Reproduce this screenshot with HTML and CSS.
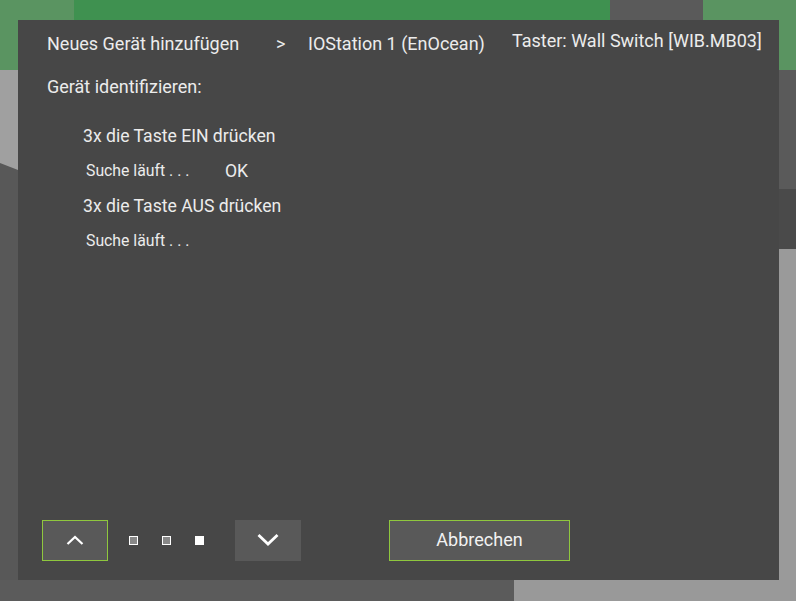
FILE: index.html
```html
<!DOCTYPE html>
<html lang="de">
<head>
<meta charset="utf-8">
<link rel="stylesheet" href="styles.css">
</head>
<body>
<div class="backdrop">
  <div class="bg bg-top-left"></div>
  <div class="bg bg-top-green"></div>
  <div class="bg bg-top-grey"></div>
  <div class="bg bg-top-right"></div>
  <div class="bg bg-left-light"></div>
  <div class="bg bg-left-dark"></div>
  <div class="bg bg-right-grey"></div>
  <div class="bg bg-right-dark"></div>
  <div class="bg bg-right-light"></div>
  <div class="bg bg-bottom-dark"></div>
  <div class="bg bg-bottom-light"></div>
</div>

<div class="dialog">
  <div class="header">
    <span class="crumb crumb-first">Neues Gerät hinzufügen</span>
    <span class="crumb-sep">&gt;</span>
    <span class="crumb crumb-second">IOStation 1 (EnOcean)</span>
    <span class="crumb crumb-device">Taster: Wall Switch [WIB.MB03]</span>
  </div>

  <div class="title">Gerät identifizieren:</div>

  <div class="steps">
    <div class="step">3x die Taste EIN drücken</div>
    <div class="status"><span class="status-label">Suche läuft . . .</span><span class="status-ok">OK</span></div>
    <div class="step">3x die Taste AUS drücken</div>
    <div class="status"><span class="status-label">Suche läuft . . .</span></div>
  </div>

  <div class="footer">
    <button class="btn btn-nav btn-focus" aria-label="hoch">
      <svg width="18" height="10" viewBox="0 0 18 10"><path d="M1.5 9 L9 2 L16.5 9" fill="none" stroke="#fff" stroke-width="2.2"/></svg>
    </button>
    <div class="pager">
      <span class="dot"></span>
      <span class="dot"></span>
      <span class="dot dot-active"></span>
    </div>
    <button class="btn btn-nav" aria-label="runter">
      <svg width="22" height="13" viewBox="0 0 22 13"><path d="M1.5 2 L11 11 L20.5 2" fill="none" stroke="#fff" stroke-width="2.8"/></svg>
    </button>
    <button class="btn btn-cancel btn-focus">Abbrechen</button>
  </div>
</div>
</body>
</html>
```

FILE: styles.css
```css
html, body {
  margin: 0;
  padding: 0;
  width: 796px;
  height: 601px;
  overflow: hidden;
  background: #5a5a5a;
  font-family: Roboto, "Liberation Sans", sans-serif;
}

.backdrop {
  position: absolute;
  inset: 0;
}

.bg { position: absolute; }
.bg-top-left { left: 0; top: 0; width: 74px; height: 70px; background: #5a9461; }
.bg-top-green { left: 74px; top: 0; width: 536px; height: 20px; background: #3f9150; }
.bg-top-grey { left: 610px; top: 0; width: 93px; height: 20px; background: #5a5a5a; }
.bg-top-right { left: 703px; top: 0; width: 93px; height: 70px; background: #5a9461; }
.bg-left-light { left: 0; top: 70px; width: 18px; height: 100px; background: #a0a0a0; }
.bg-left-dark {
  left: 0; top: 160px; width: 18px; height: 441px; background: #585858;
  clip-path: polygon(0 3px, 100% 10px, 100% 100%, 0 100%);
}
.bg-right-grey { left: 779px; top: 70px; width: 17px; height: 119px; background: #5a5a5a; }
.bg-right-dark { left: 779px; top: 189px; width: 17px; height: 60px; background: #4a4a4a; }
.bg-right-light { left: 779px; top: 249px; width: 17px; height: 352px; background: #9a9a9a; }
.bg-bottom-dark { left: 0; top: 580px; width: 514px; height: 21px; background: #5b5b5b; }
.bg-bottom-light { left: 514px; top: 580px; width: 282px; height: 21px; background: #999999; }

.dialog {
  position: absolute;
  left: 18px;
  top: 20px;
  width: 761px;
  height: 560px;
  background: #474747;
  color: #ececec;
  box-sizing: border-box;
  display: flex;
  flex-direction: column;
}

.header {
  display: flex;
  align-items: flex-start;
  padding: 12px 0 0 29px;
  height: 36px;
  box-sizing: border-box;
  font-size: 18px;
  line-height: 24px;
}

.crumb-first { width: 229px; }
.crumb-sep { width: 32px; }
.crumb-second { width: 204px; }
.crumb-device { margin-top: -3px; }

.title {
  padding: 19px 0 0 29px;
  font-size: 18px;
  line-height: 24px;
}

.steps {
  padding: 25px 0 0 65px;
  display: flex;
  flex-direction: column;
}

.step {
  font-size: 17.6px;
  line-height: 24px;
  height: 35px;
}

.status {
  font-size: 15.8px;
  line-height: 24px;
  height: 35px;
  padding-left: 3px;
  display: flex;
}

.status-label { width: 139px; }
.status-ok { font-size: 17.6px; }

.footer {
  margin-top: auto;
  padding: 0 0 19px 24px;
  display: flex;
  align-items: center;
}

.btn {
  height: 41px;
  box-sizing: border-box;
  background: #595959;
  border: 1px solid transparent;
  color: #f2f2f2;
  display: flex;
  align-items: center;
  justify-content: center;
  padding: 0 0 2px;
  font-family: inherit;
}

.btn-focus { border-color: #8fc73e; }

.btn-nav { width: 66px; }

.pager {
  display: flex;
  gap: 24px;
  padding: 0 31px 0 21px;
}

.dot {
  width: 9px;
  height: 9px;
  box-sizing: border-box;
  border: 1px solid #ffffff;
  background: #888888;
}

.dot-active { background: #ffffff; }

.btn-cancel {
  width: 181px;
  margin-left: 88px;
  font-size: 18px;
}
```
